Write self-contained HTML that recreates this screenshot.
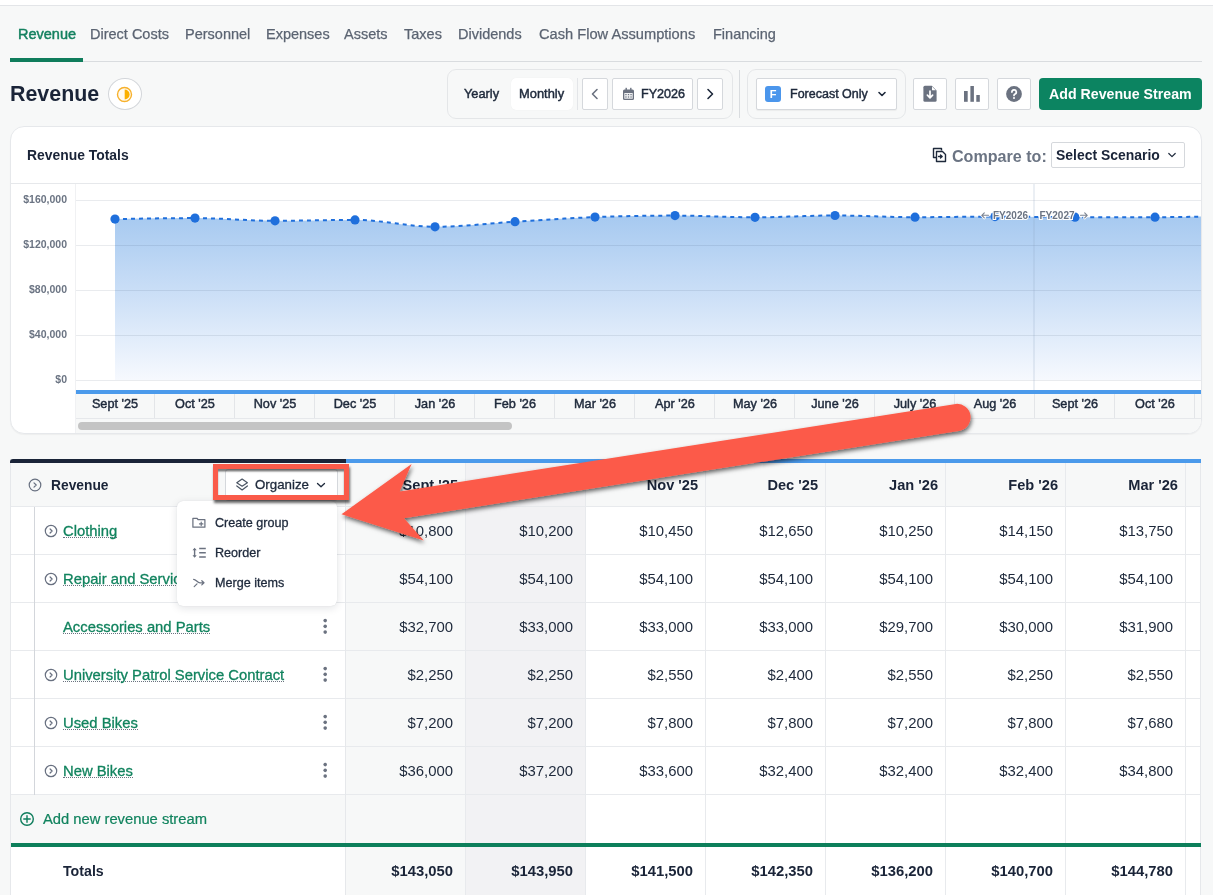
<!DOCTYPE html>
<html><head><meta charset="utf-8">
<style>
*{box-sizing:border-box;margin:0;padding:0}
html,body{width:1213px;height:895px;overflow:hidden}
body{background:#f7f8f8;font-family:"Liberation Sans",sans-serif;color:#1e293b;position:relative}
.abs{position:absolute}
.topstrip{left:0;top:0;width:1213px;height:6px;background:#fff;border-bottom:1px solid #e3e5e8}
.tabs{left:10px;top:0;width:1192px;height:62px;border-bottom:1px solid #d9dcdf}
.tab{position:absolute;top:26px;font-size:14.5px;color:#5b6472;-webkit-text-stroke:0.25px currentColor;white-space:nowrap;line-height:16px}
.tab.act{color:#13815f;-webkit-text-stroke:0.45px currentColor}
.tabline{left:10px;top:58px;width:73px;height:4px;background:#0f7d5c}
h1{position:absolute;left:10px;top:81px;font-size:21.4px;font-weight:bold;line-height:26px;color:#1a2438}
.btn{position:absolute;background:#fff;border:1px solid #d5d8dc;border-radius:2px}
.grp{position:absolute;border:1px solid #e4e6e8;border-radius:9px;background:#f7f8f8}
.t13{font-size:12.6px;line-height:15px;white-space:nowrap;-webkit-text-stroke:0.45px currentColor}
.ylab{left:10px;width:57px;text-align:right;font-size:10.5px;font-weight:bold;color:#6b7483;line-height:12px}
.xl{position:absolute;top:397px;width:80px;text-align:center;font-size:12.7px;line-height:15px;color:#1e293b;-webkit-text-stroke:0.45px currentColor;white-space:nowrap}
.hd{font-size:14.2px;font-weight:bold;line-height:16px;color:#1a2438;text-align:right;white-space:nowrap}
.rn{font-size:14.8px;line-height:18px;color:#11835e;-webkit-text-stroke:0.3px currentColor;white-space:nowrap;border-bottom:1px dotted #6b7280;height:16px}
.dv{width:107px;text-align:right;font-size:14.9px;line-height:18px;color:#1e293b;white-space:nowrap}
.mi{left:215px;font-size:12.6px;line-height:16px;color:#1e293b;-webkit-text-stroke:0.3px currentColor;white-space:nowrap}
</style></head><body><div id="wrap" style="position:absolute;left:0;top:0;width:1213px;height:895px;will-change:transform">
<div class="abs topstrip"></div>
<div class="abs tabs"></div>
<div class="tab act" style="left:18px">Revenue</div>
<div class="tab" style="left:90px">Direct Costs</div>
<div class="tab" style="left:185px">Personnel</div>
<div class="tab" style="left:266px">Expenses</div>
<div class="tab" style="left:344px">Assets</div>
<div class="tab" style="left:404px">Taxes</div>
<div class="tab" style="left:458px">Dividends</div>
<div class="tab" style="left:539px;font-size:14.65px">Cash Flow Assumptions</div>
<div class="tab" style="left:713px">Financing</div>
<div class="abs tabline"></div>

<h1>Revenue</h1>
<div class="abs" style="left:108px;top:77.5px;width:34px;height:32.5px;border-radius:50%;background:#fff;border:1px solid #d3d6da"></div>
<svg class="abs" style="left:116.2px;top:85.5px" width="17" height="17" viewBox="0 0 17 17"><circle cx="8.5" cy="8.5" r="7" fill="#fffaf0" stroke="#f7b12c" stroke-width="1.4"/><path d="M8.7 3.6 A4.9 4.9 0 0 1 8.7 13.4 Z" fill="#fbb000"/></svg>

<!-- toolbar group 1 -->
<div class="grp" style="left:447px;top:69px;width:286px;height:50px"></div>
<div class="abs t13" style="left:464px;top:85.8px;font-size:12.8px">Yearly</div>
<div class="abs" style="left:511px;top:78px;width:62px;height:32px;background:#fff;border-radius:5px;box-shadow:0 0 1px rgba(0,0,0,.08)"></div>
<div class="abs t13" style="left:519px;top:85.8px;font-size:12.9px">Monthly</div>
<div class="abs" style="left:577px;top:78px;width:1px;height:32px;background:#e3e5e8"></div>
<div class="btn" style="left:582px;top:78px;width:26px;height:32px"></div>
<svg class="abs" style="left:588px;top:87px" width="14" height="14" viewBox="0 0 14 14"><path d="M9 2.5 L4.5 7 L9 11.5" fill="none" stroke="#6b7280" stroke-width="1.6" stroke-linecap="round" stroke-linejoin="round"/></svg>
<div class="btn" style="left:612px;top:78px;width:81px;height:32px"></div>
<svg class="abs" style="left:622px;top:87px" width="13" height="14" viewBox="0 0 13 14"><rect x="1" y="2.5" width="11" height="10.5" rx="1.5" fill="#6b7280"/><rect x="2.3" y="6" width="8.4" height="5.7" fill="#fff" opacity=".9"/><rect x="3.5" y="0.8" width="1.4" height="3" fill="#6b7280"/><rect x="8.1" y="0.8" width="1.4" height="3" fill="#6b7280"/><g fill="#6b7280"><rect x="3.3" y="7" width="1.3" height="1.2"/><rect x="5.85" y="7" width="1.3" height="1.2"/><rect x="8.4" y="7" width="1.3" height="1.2"/><rect x="3.3" y="9.4" width="1.3" height="1.2"/><rect x="5.85" y="9.4" width="1.3" height="1.2"/><rect x="8.4" y="9.4" width="1.3" height="1.2"/></g></svg>
<div class="abs t13" style="left:641px;top:86.5px;font-size:12.6px">FY2026</div>
<div class="btn" style="left:697px;top:78px;width:26px;height:32px"></div>
<svg class="abs" style="left:703px;top:87px" width="14" height="14" viewBox="0 0 14 14"><path d="M5 2.5 L9.5 7 L5 11.5" fill="none" stroke="#1e293b" stroke-width="1.6" stroke-linecap="round" stroke-linejoin="round"/></svg>
<div class="abs" style="left:739px;top:70px;width:1px;height:48px;background:#d9dcdf"></div>

<!-- toolbar group 2 -->
<div class="grp" style="left:747px;top:69px;width:159px;height:50px"></div>
<div class="btn" style="left:756px;top:78px;width:141px;height:32px;box-shadow:0 1px 1px rgba(0,0,0,.05)"></div>
<div class="abs" style="left:765px;top:86px;width:16px;height:16px;border-radius:3px;background:#4b96ec;color:#fff;font-weight:bold;font-size:11px;line-height:16px;text-align:center">F</div>
<div class="abs t13" style="left:790px;top:86.5px;font-size:12.5px">Forecast Only</div>
<svg class="abs" style="left:876px;top:88px" width="12" height="12" viewBox="0 0 12 12"><path d="M3 4.5 L6 7.5 L9 4.5" fill="none" stroke="#1e293b" stroke-width="1.6" stroke-linecap="round" stroke-linejoin="round"/></svg>

<!-- icon buttons -->
<div class="btn" style="left:913px;top:78px;width:34px;height:32px"></div>
<svg class="abs" style="left:921px;top:85px" width="18" height="18" viewBox="0 0 18 18"><path d="M3.9 0.7 H10.8 L15.6 5.5 V15.3 Q15.6 16.8 14.1 16.8 H3.9 Q2.4 16.8 2.4 15.3 V2.2 Q2.4 0.7 3.9 0.7 Z" fill="#6b7280"/><path d="M11 1.5 L14.8 5.3 H11.6 Q11 5.3 11 4.7 Z" fill="#fff"/><path d="M9 6.2 V12.5 M6.4 10.2 L9 12.8 L11.6 10.2" fill="none" stroke="#fff" stroke-width="1.7" stroke-linecap="round" stroke-linejoin="round"/></svg>
<div class="btn" style="left:955px;top:78px;width:34px;height:32px"></div>
<svg class="abs" style="left:963px;top:85px" width="18" height="18" viewBox="0 0 18 18"><rect x="1" y="6" width="3.7" height="10.8" fill="#6b7280"/><rect x="7.4" y="1" width="3.5" height="15.8" fill="#6b7280"/><rect x="13.3" y="10" width="3.5" height="6.8" fill="#6b7280"/></svg>
<div class="btn" style="left:997px;top:78px;width:34px;height:32px"></div>
<svg class="abs" style="left:1005px;top:85px" width="18" height="18" viewBox="0 0 18 18"><circle cx="9" cy="9" r="7.9" fill="#6b7280"/><path d="M6.9 7.1 A2.2 2.2 0 1 1 9.7 9.2 C9.2 9.5 9 9.9 9 10.5" fill="none" stroke="#fff" stroke-width="1.7" stroke-linecap="round"/><circle cx="9" cy="12.9" r="1" fill="#fff"/></svg>
<div class="abs" style="left:1039px;top:78px;width:163px;height:32px;background:#0c8461;border-radius:4px"></div>
<div class="abs" style="left:1049px;top:86px;font-size:14.2px;font-weight:bold;color:#fff;line-height:16px;white-space:nowrap">Add Revenue Stream</div>


<!-- chart card -->
<div class="abs" style="left:10px;top:126px;width:1192px;height:308px;background:#fff;border:1px solid #e6e8eb;border-radius:14px;overflow:hidden;box-shadow:0 1px 1px rgba(0,0,0,.04)">
 <div class="abs" style="left:0;top:56px;width:1192px;height:1px;background:#e6e8eb"></div>
 <div class="abs" style="left:65px;top:268px;width:1127px;height:39px;background:#f7f8f8"></div>
</div>
<div class="abs" style="left:27px;top:147px;font-size:13.9px;font-weight:bold;line-height:16px;color:#1a2438;white-space:nowrap">Revenue Totals</div>
<svg class="abs" style="left:932px;top:146.5px" width="15" height="16" viewBox="0 0 15 16"><path d="M9.5 3.5 V1.5 H1.5 V10.5 H4" fill="none" stroke="#1e293b" stroke-width="1.4" stroke-linejoin="round"/><path d="M4.5 4.5 H10.5 L13.5 7.5 V14.5 H4.5 Z" fill="none" stroke="#1e293b" stroke-width="1.4" stroke-linejoin="round"/><path d="M6.5 9.5 H10 M8.5 8 L10.2 9.5 L8.5 11" fill="none" stroke="#1e293b" stroke-width="1.3" stroke-linecap="round" stroke-linejoin="round"/></svg>
<div class="abs" style="left:952px;top:146.5px;font-size:16.1px;font-weight:bold;line-height:18px;color:#6b7483;white-space:nowrap">Compare to:</div>
<div class="abs" style="left:1051px;top:142px;width:134px;height:26px;background:#fff;border:1px solid #d5d8dc;border-radius:2px"></div>
<div class="abs" style="left:1056px;top:147.3px;font-size:13.95px;font-weight:bold;line-height:16px;color:#1a2438;white-space:nowrap">Select Scenario</div>
<svg class="abs" style="left:1166px;top:149px" width="12" height="12" viewBox="0 0 12 12"><path d="M2.8 4.5 L6 7.6 L9.2 4.5" fill="none" stroke="#1e293b" stroke-width="1.2" stroke-linecap="round" stroke-linejoin="round"/></svg>

<div class="abs ylab" style="top:193.3px">$160,000</div>
<div class="abs ylab" style="top:238.3px">$120,000</div>
<div class="abs ylab" style="top:283.3px">$80,000</div>
<div class="abs ylab" style="top:328.3px">$40,000</div>
<div class="abs ylab" style="top:373.3px">$0</div>

<svg class="abs" style="left:0;top:0" width="1213" height="440" viewBox="0 0 1213 440">
 <defs>
  <linearGradient id="ag" x1="0" y1="215" x2="0" y2="380" gradientUnits="userSpaceOnUse">
   <stop offset="0" stop-color="#a6c9f0"/>
   <stop offset="0.5" stop-color="#cde0f7"/>
   <stop offset="1" stop-color="#f6f9fe"/>
  </linearGradient>
  <clipPath id="pc"><rect x="76" y="184" width="1125" height="206"/></clipPath>
 </defs>
 <rect x="75" y="184" width="1" height="249" fill="#f0f1f3"/>
 <g clip-path="url(#pc)">
  <path d="M115.0 219.1 C141.7 218.6 168.3 218.1 195.0 218.1 C221.7 218.1 248.3 220.8 275.0 220.8 C301.7 220.8 328.3 219.9 355.0 219.9 C381.7 219.9 408.3 226.8 435.0 226.8 C461.7 226.8 488.3 223.3 515.0 221.7 C541.7 220.1 568.3 218.1 595.0 217.1 C621.7 216.1 648.3 215.6 675.0 215.6 C701.7 215.6 728.3 217.3 755.0 217.3 C781.7 217.3 808.3 215.5 835.0 215.5 C861.7 215.5 888.3 217.2 915.0 217.2 C941.7 217.2 968.3 216.6 995.0 216.6 C1021.7 216.6 1048.3 217.2 1075.0 217.2 C1101.7 217.2 1128.3 217.2 1155.0 217.2 C1181.7 217.2 1208.3 216.4 1235.0 215.6 L1235 380 L115 380 Z" fill="url(#ag)"/>
  <g stroke="rgba(40,60,90,0.1)" stroke-width="1"><line x1="76" y1="200.5" x2="1201" y2="200.5"/><line x1="76" y1="245.5" x2="1201" y2="245.5"/><line x1="76" y1="290.5" x2="1201" y2="290.5"/><line x1="76" y1="335.5" x2="1201" y2="335.5"/><line x1="76" y1="380.5" x2="1201" y2="380.5"/></g>
  
  <rect x="1033.5" y="184" width="1" height="206" fill="rgba(140,160,190,0.35)"/>
  <path d="M115.0 219.1 C141.7 218.6 168.3 218.1 195.0 218.1 C221.7 218.1 248.3 220.8 275.0 220.8 C301.7 220.8 328.3 219.9 355.0 219.9 C381.7 219.9 408.3 226.8 435.0 226.8 C461.7 226.8 488.3 223.3 515.0 221.7 C541.7 220.1 568.3 218.1 595.0 217.1 C621.7 216.1 648.3 215.6 675.0 215.6 C701.7 215.6 728.3 217.3 755.0 217.3 C781.7 217.3 808.3 215.5 835.0 215.5 C861.7 215.5 888.3 217.2 915.0 217.2 C941.7 217.2 968.3 216.6 995.0 216.6 C1021.7 216.6 1048.3 217.2 1075.0 217.2 C1101.7 217.2 1128.3 217.2 1155.0 217.2 C1181.7 217.2 1208.3 216.4 1235.0 215.6" fill="none" stroke="#1f6fdc" stroke-width="2" stroke-dasharray="4 4"/>
  <g fill="#1f6fdc"><circle cx="115" cy="219.1" r="4.6"/><circle cx="195" cy="218.1" r="4.6"/><circle cx="275" cy="220.8" r="4.6"/><circle cx="355" cy="219.9" r="4.6"/><circle cx="435" cy="226.8" r="4.6"/><circle cx="515" cy="221.7" r="4.6"/><circle cx="595" cy="217.1" r="4.6"/><circle cx="675" cy="215.6" r="4.6"/><circle cx="755" cy="217.3" r="4.6"/><circle cx="835" cy="215.5" r="4.6"/><circle cx="915" cy="217.2" r="4.6"/><circle cx="995" cy="216.6" r="4.6"/><circle cx="1075" cy="217.2" r="4.6"/><circle cx="1155" cy="217.2" r="4.6"/></g>
  <g font-family="Liberation Sans" font-size="10" fill="#6b7483" stroke="#fff" stroke-width="2.2" paint-order="stroke" font-weight="bold">
   <text x="993" y="219">FY2026</text>
   <text x="1039.5" y="219">FY2027</text>
   <path d="M988.5 215.3 H981.8 M984.3 212.8 L981.8 215.3 L984.3 217.8 M1080.5 215.3 H1087.2 M1084.7 212.8 L1087.2 215.3 L1084.7 217.8" fill="none" stroke="#fff" stroke-width="3" stroke-linecap="round" stroke-linejoin="round"/>
   <path d="M988.5 215.3 H981.8 M984.3 212.8 L981.8 215.3 L984.3 217.8 M1080.5 215.3 H1087.2 M1084.7 212.8 L1087.2 215.3 L1084.7 217.8" fill="none" stroke="#7b8391" stroke-width="1.1" stroke-linecap="round" stroke-linejoin="round"/>
  </g>
 </g>
 <rect x="76" y="390" width="1125" height="4" fill="#4b9aeb"/>
 <rect x="76" y="394" width="1125" height="24" fill="#f7f8f8"/>
 <rect x="76" y="418" width="1125" height="1" fill="#e6e8eb"/>
 <rect x="78" y="422" width="434" height="8" rx="4" fill="#c4c4c4"/>
</svg>
<div class="abs" style="left:154px;top:394px;width:1px;height:24px;background:#e3e5e8"></div><div class="abs" style="left:234px;top:394px;width:1px;height:24px;background:#e3e5e8"></div><div class="abs" style="left:314px;top:394px;width:1px;height:24px;background:#e3e5e8"></div><div class="abs" style="left:394px;top:394px;width:1px;height:24px;background:#e3e5e8"></div><div class="abs" style="left:474px;top:394px;width:1px;height:24px;background:#e3e5e8"></div><div class="abs" style="left:554px;top:394px;width:1px;height:24px;background:#e3e5e8"></div><div class="abs" style="left:634px;top:394px;width:1px;height:24px;background:#e3e5e8"></div><div class="abs" style="left:714px;top:394px;width:1px;height:24px;background:#e3e5e8"></div><div class="abs" style="left:794px;top:394px;width:1px;height:24px;background:#e3e5e8"></div><div class="abs" style="left:874px;top:394px;width:1px;height:24px;background:#e3e5e8"></div><div class="abs" style="left:954px;top:394px;width:1px;height:24px;background:#e3e5e8"></div><div class="abs" style="left:1034px;top:394px;width:1px;height:24px;background:#e3e5e8"></div><div class="abs" style="left:1114px;top:394px;width:1px;height:24px;background:#e3e5e8"></div><div class="abs" style="left:1194px;top:394px;width:1px;height:24px;background:#e3e5e8"></div>
<div class="xl" style="left:75px">Sept '25</div><div class="xl" style="left:155px">Oct '25</div><div class="xl" style="left:235px">Nov '25</div><div class="xl" style="left:315px">Dec '25</div><div class="xl" style="left:395px">Jan '26</div><div class="xl" style="left:475px">Feb '26</div><div class="xl" style="left:555px">Mar '26</div><div class="xl" style="left:635px">Apr '26</div><div class="xl" style="left:715px">May '26</div><div class="xl" style="left:795px">June '26</div><div class="xl" style="left:875px">July '26</div><div class="xl" style="left:955px">Aug '26</div><div class="xl" style="left:1035px">Sept '26</div><div class="xl" style="left:1115px">Oct '26</div>

<!-- table -->
<div class="abs" style="left:10px;top:459px;width:1191px;height:436px;background:#fff;border-left:1px solid #e6e8eb"></div>
<div class="abs" style="left:11px;top:463px;width:1189px;height:44px;background:#f7f8f8"></div>
<div class="abs" style="left:346px;top:463px;width:120px;height:432px;background:#f7f8f8"></div>
<div class="abs" style="left:466px;top:463px;width:120px;height:432px;background:#f2f2f4"></div>
<div class="abs" style="left:11px;top:795px;width:335px;height:48px;background:#f7f8f8"></div>
<div class="abs" style="left:10px;top:459px;width:336px;height:4px;background:#1a2438;border-top-left-radius:3px"></div>
<div class="abs" style="left:346px;top:459px;width:855px;height:4px;background:#4b9aeb"></div>
<div class="abs" style="left:11px;top:506px;width:1189px;height:1px;background:#e8eaed"></div>
<div class="abs" style="left:11px;top:554px;width:1189px;height:1px;background:#e8eaed"></div>
<div class="abs" style="left:11px;top:602px;width:1189px;height:1px;background:#e8eaed"></div>
<div class="abs" style="left:11px;top:650px;width:1189px;height:1px;background:#e8eaed"></div>
<div class="abs" style="left:11px;top:698px;width:1189px;height:1px;background:#e8eaed"></div>
<div class="abs" style="left:11px;top:746px;width:1189px;height:1px;background:#e8eaed"></div>
<div class="abs" style="left:11px;top:794px;width:1189px;height:1px;background:#e8eaed"></div>
<div class="abs" style="left:465px;top:463px;width:1px;height:432px;background:#e8eaed"></div>
<div class="abs" style="left:585px;top:463px;width:1px;height:432px;background:#e8eaed"></div>
<div class="abs" style="left:705px;top:463px;width:1px;height:432px;background:#e8eaed"></div>
<div class="abs" style="left:825px;top:463px;width:1px;height:432px;background:#e8eaed"></div>
<div class="abs" style="left:945px;top:463px;width:1px;height:432px;background:#e8eaed"></div>
<div class="abs" style="left:1065px;top:463px;width:1px;height:432px;background:#e8eaed"></div>
<div class="abs" style="left:1185px;top:463px;width:1px;height:432px;background:#e8eaed"></div>
<div class="abs" style="left:345px;top:463px;width:1px;height:432px;background:#e6e8eb"></div>
<div class="abs" style="left:1200px;top:463px;width:1px;height:432px;background:#e6e8eb"></div>
<div class="abs" style="left:34px;top:507px;width:1px;height:288px;background:#d3d6db"></div>
<svg class="abs" style="left:28px;top:478px" width="14" height="14" viewBox="0 0 14 14"><circle cx="7" cy="7" r="5.8" fill="none" stroke="#687080" stroke-width="1.2"/><path d="M6 4.8 L8.2 7 L6 9.2" fill="none" stroke="#687080" stroke-width="1.2" stroke-linecap="round" stroke-linejoin="round"/></svg>
<div class="abs hd" style="left:51px;top:478px;text-align:left;width:auto;font-size:13.8px">Revenue</div>
<div class="abs hd" style="left:346px;top:477px;width:112px;font-size:14.6px">Sept '25</div>
<div class="abs hd" style="left:466px;top:477px;width:112px;font-size:14.6px">Oct '25</div>
<div class="abs hd" style="left:586px;top:477px;width:112px;font-size:14.6px">Nov '25</div>
<div class="abs hd" style="left:706px;top:477px;width:112px;font-size:14.6px">Dec '25</div>
<div class="abs hd" style="left:826px;top:477px;width:112px;font-size:14.6px">Jan '26</div>
<div class="abs hd" style="left:946px;top:477px;width:112px;font-size:14.6px">Feb '26</div>
<div class="abs hd" style="left:1066px;top:477px;width:112px;font-size:14.6px">Mar '26</div>
<svg class="abs" style="left:44px;top:524px" width="14" height="14" viewBox="0 0 14 14"><circle cx="7" cy="7" r="5.7" fill="none" stroke="#687080" stroke-width="1.2"/><path d="M6.1 5 L8.1 7 L6.1 9" fill="none" stroke="#687080" stroke-width="1.2" stroke-linecap="round" stroke-linejoin="round"/></svg>
<div class="abs rn" style="left:63px;top:522px">Clothing</div>
<svg class="abs" style="left:321px;top:522px" width="8" height="18" viewBox="0 0 8 18"><g fill="#6b7280"><circle cx="4.2" cy="2.6" r="1.8"/><circle cx="4.2" cy="8.35" r="1.8"/><circle cx="4.2" cy="14.1" r="1.8"/></g></svg>
<div class="abs dv" style="left:346px;top:522px">$10,800</div>
<div class="abs dv" style="left:466px;top:522px">$10,200</div>
<div class="abs dv" style="left:586px;top:522px">$10,450</div>
<div class="abs dv" style="left:706px;top:522px">$12,650</div>
<div class="abs dv" style="left:826px;top:522px">$10,250</div>
<div class="abs dv" style="left:946px;top:522px">$14,150</div>
<div class="abs dv" style="left:1066px;top:522px">$13,750</div>
<svg class="abs" style="left:44px;top:572px" width="14" height="14" viewBox="0 0 14 14"><circle cx="7" cy="7" r="5.7" fill="none" stroke="#687080" stroke-width="1.2"/><path d="M6.1 5 L8.1 7 L6.1 9" fill="none" stroke="#687080" stroke-width="1.2" stroke-linecap="round" stroke-linejoin="round"/></svg>
<div class="abs rn" style="left:63px;top:570px">Repair and Services</div>
<svg class="abs" style="left:321px;top:570px" width="8" height="18" viewBox="0 0 8 18"><g fill="#6b7280"><circle cx="4.2" cy="2.6" r="1.8"/><circle cx="4.2" cy="8.35" r="1.8"/><circle cx="4.2" cy="14.1" r="1.8"/></g></svg>
<div class="abs dv" style="left:346px;top:570px">$54,100</div>
<div class="abs dv" style="left:466px;top:570px">$54,100</div>
<div class="abs dv" style="left:586px;top:570px">$54,100</div>
<div class="abs dv" style="left:706px;top:570px">$54,100</div>
<div class="abs dv" style="left:826px;top:570px">$54,100</div>
<div class="abs dv" style="left:946px;top:570px">$54,100</div>
<div class="abs dv" style="left:1066px;top:570px">$54,100</div>
<div class="abs rn" style="left:63px;top:618px">Accessories and Parts</div>
<svg class="abs" style="left:321px;top:618px" width="8" height="18" viewBox="0 0 8 18"><g fill="#6b7280"><circle cx="4.2" cy="2.6" r="1.8"/><circle cx="4.2" cy="8.35" r="1.8"/><circle cx="4.2" cy="14.1" r="1.8"/></g></svg>
<div class="abs dv" style="left:346px;top:618px">$32,700</div>
<div class="abs dv" style="left:466px;top:618px">$33,000</div>
<div class="abs dv" style="left:586px;top:618px">$33,000</div>
<div class="abs dv" style="left:706px;top:618px">$33,000</div>
<div class="abs dv" style="left:826px;top:618px">$29,700</div>
<div class="abs dv" style="left:946px;top:618px">$30,000</div>
<div class="abs dv" style="left:1066px;top:618px">$31,900</div>
<svg class="abs" style="left:44px;top:668px" width="14" height="14" viewBox="0 0 14 14"><circle cx="7" cy="7" r="5.7" fill="none" stroke="#687080" stroke-width="1.2"/><path d="M6.1 5 L8.1 7 L6.1 9" fill="none" stroke="#687080" stroke-width="1.2" stroke-linecap="round" stroke-linejoin="round"/></svg>
<div class="abs rn" style="left:63px;top:666px">University Patrol Service Contract</div>
<svg class="abs" style="left:321px;top:666px" width="8" height="18" viewBox="0 0 8 18"><g fill="#6b7280"><circle cx="4.2" cy="2.6" r="1.8"/><circle cx="4.2" cy="8.35" r="1.8"/><circle cx="4.2" cy="14.1" r="1.8"/></g></svg>
<div class="abs dv" style="left:346px;top:666px">$2,250</div>
<div class="abs dv" style="left:466px;top:666px">$2,250</div>
<div class="abs dv" style="left:586px;top:666px">$2,550</div>
<div class="abs dv" style="left:706px;top:666px">$2,400</div>
<div class="abs dv" style="left:826px;top:666px">$2,550</div>
<div class="abs dv" style="left:946px;top:666px">$2,250</div>
<div class="abs dv" style="left:1066px;top:666px">$2,550</div>
<svg class="abs" style="left:44px;top:716px" width="14" height="14" viewBox="0 0 14 14"><circle cx="7" cy="7" r="5.7" fill="none" stroke="#687080" stroke-width="1.2"/><path d="M6.1 5 L8.1 7 L6.1 9" fill="none" stroke="#687080" stroke-width="1.2" stroke-linecap="round" stroke-linejoin="round"/></svg>
<div class="abs rn" style="left:63px;top:714px">Used Bikes</div>
<svg class="abs" style="left:321px;top:714px" width="8" height="18" viewBox="0 0 8 18"><g fill="#6b7280"><circle cx="4.2" cy="2.6" r="1.8"/><circle cx="4.2" cy="8.35" r="1.8"/><circle cx="4.2" cy="14.1" r="1.8"/></g></svg>
<div class="abs dv" style="left:346px;top:714px">$7,200</div>
<div class="abs dv" style="left:466px;top:714px">$7,200</div>
<div class="abs dv" style="left:586px;top:714px">$7,800</div>
<div class="abs dv" style="left:706px;top:714px">$7,800</div>
<div class="abs dv" style="left:826px;top:714px">$7,200</div>
<div class="abs dv" style="left:946px;top:714px">$7,800</div>
<div class="abs dv" style="left:1066px;top:714px">$7,680</div>
<svg class="abs" style="left:44px;top:764px" width="14" height="14" viewBox="0 0 14 14"><circle cx="7" cy="7" r="5.7" fill="none" stroke="#687080" stroke-width="1.2"/><path d="M6.1 5 L8.1 7 L6.1 9" fill="none" stroke="#687080" stroke-width="1.2" stroke-linecap="round" stroke-linejoin="round"/></svg>
<div class="abs rn" style="left:63px;top:762px">New Bikes</div>
<svg class="abs" style="left:321px;top:762px" width="8" height="18" viewBox="0 0 8 18"><g fill="#6b7280"><circle cx="4.2" cy="2.6" r="1.8"/><circle cx="4.2" cy="8.35" r="1.8"/><circle cx="4.2" cy="14.1" r="1.8"/></g></svg>
<div class="abs dv" style="left:346px;top:762px">$36,000</div>
<div class="abs dv" style="left:466px;top:762px">$37,200</div>
<div class="abs dv" style="left:586px;top:762px">$33,600</div>
<div class="abs dv" style="left:706px;top:762px">$32,400</div>
<div class="abs dv" style="left:826px;top:762px">$32,400</div>
<div class="abs dv" style="left:946px;top:762px">$32,400</div>
<div class="abs dv" style="left:1066px;top:762px">$34,800</div>
<div class="abs" style="left:11px;top:843px;width:1190px;height:4px;background:#0d7f5b"></div>
<svg class="abs" style="left:19px;top:811px" width="16" height="16" viewBox="0 0 16 16"><circle cx="8" cy="8" r="6.3" fill="none" stroke="#0f7d5c" stroke-width="1.4"/><path d="M8 4.8 V11.2 M4.8 8 H11.2" stroke="#0f7d5c" stroke-width="1.4" stroke-linecap="round"/></svg>
<div class="abs" style="left:43px;top:810px;font-size:14.75px;line-height:18px;color:#11835e;white-space:nowrap;-webkit-text-stroke:0.2px currentColor">Add new revenue stream</div>
<div class="abs hd" style="left:63px;top:863px;text-align:left;width:auto">Totals</div>
<div class="abs hd" style="left:346px;top:863px;width:107px;font-size:14.8px">$143,050</div>
<div class="abs hd" style="left:466px;top:863px;width:107px;font-size:14.8px">$143,950</div>
<div class="abs hd" style="left:586px;top:863px;width:107px;font-size:14.8px">$141,500</div>
<div class="abs hd" style="left:706px;top:863px;width:107px;font-size:14.8px">$142,350</div>
<div class="abs hd" style="left:826px;top:863px;width:107px;font-size:14.8px">$136,200</div>
<div class="abs hd" style="left:946px;top:863px;width:107px;font-size:14.8px">$140,700</div>
<div class="abs hd" style="left:1066px;top:863px;width:107px;font-size:14.8px">$144,780</div>

<!-- organize button + menu -->
<div class="abs" style="left:225px;top:469px;width:113px;height:32px;background:#fff;border:1px solid #d5d8dc;border-radius:3px"></div>
<svg class="abs" style="left:235px;top:478px" width="15" height="15" viewBox="0 0 15 15"><path d="M7.1 1 L12.4 4.7 L7.1 8.2 L1.8 4.7 Z" fill="none" stroke="#4b5563" stroke-width="1.2" stroke-linejoin="round"/><path d="M1.8 7.9 L7.1 11.9 L12.4 7.9" fill="none" stroke="#4b5563" stroke-width="1.2" stroke-linejoin="round" stroke-linecap="round"/></svg>
<div class="abs" style="left:255px;top:477px;font-size:13.3px;line-height:16px;color:#1e293b;white-space:nowrap;-webkit-text-stroke:0.3px currentColor">Organize</div>
<svg class="abs" style="left:315px;top:479px" width="12" height="12" viewBox="0 0 12 12"><path d="M2.5 4.5 L6 7.8 L9.5 4.5" fill="none" stroke="#1e293b" stroke-width="1.3" stroke-linecap="round" stroke-linejoin="round"/></svg>

<div class="abs" style="left:177px;top:501px;width:160px;height:105px;background:#fff;border-radius:6px;box-shadow:0 2px 8px rgba(15,23,42,.12),0 0 1px rgba(15,23,42,.15)"></div>
<svg class="abs" style="left:191px;top:515px" width="16" height="15" viewBox="0 0 16 15"><path d="M1.9 3.3 H5.9 L7.2 4.7 H13.9 V12.2 H1.9 Z" fill="none" stroke="#6b7280" stroke-width="1.25" stroke-linejoin="round"/><path d="M10.2 7.2 V10.6 M8.5 8.9 H11.9" stroke="#6b7280" stroke-width="1.2" stroke-linecap="round"/></svg>
<div class="abs mi" style="top:515px">Create group</div>
<svg class="abs" style="left:191px;top:545px" width="16" height="15" viewBox="0 0 16 15"><path d="M3.6 4 V11.5" stroke="#6b7280" stroke-width="1.4"/><path d="M1.5 5.2 L3.6 2.8 L5.7 5.2 Z M1.5 10.3 L3.6 12.7 L5.7 10.3 Z" fill="#6b7280"/><path d="M8.2 3.5 H14.8 M8.2 7.7 H14.8 M8.2 12 H14.8" stroke="#6b7280" stroke-width="1.4"/></svg>
<div class="abs mi" style="top:545px">Reorder</div>
<svg class="abs" style="left:191px;top:575px" width="16" height="15" viewBox="0 0 16 15"><path d="M2.6 4.3 C5.2 4.3 6.2 7.8 9 7.8 H12.8 M10.8 5.7 L13 7.8 L10.8 9.9 M3.2 11.7 L6 8.9" fill="none" stroke="#6b7280" stroke-width="1.2" stroke-linecap="round" stroke-linejoin="round"/></svg>
<div class="abs mi" style="top:575px">Merge items</div>

<div class="abs" style="left:213px;top:464px;width:136px;height:36px;border:5.5px solid #fa5a49;box-shadow:1px 3px 2.5px rgba(0,0,0,.6), inset 0 2.5px 1.5px rgba(0,0,0,.5)"></div>
<!-- arrow -->
<svg class="abs" style="left:0;top:0" width="1213" height="895" viewBox="0 0 1213 895">
 <defs><filter id="sh" x="-10%" y="-20%" width="120%" height="150%"><feDropShadow dx="1" dy="2.5" stdDeviation="2" flood-color="#000" flood-opacity=".6"/></filter></defs>
 <path d="M955.9 403.9 L399.7 491.4 L411.6 464.0 L341.5 514.3 L423.7 540.6 L404.0 518.2 L960.1 430.7 A13.6 13.6 0 0 0 955.9 403.9 Z" fill="#fc5a48" filter="url(#sh)"/>
</svg>
</div></body></html>
